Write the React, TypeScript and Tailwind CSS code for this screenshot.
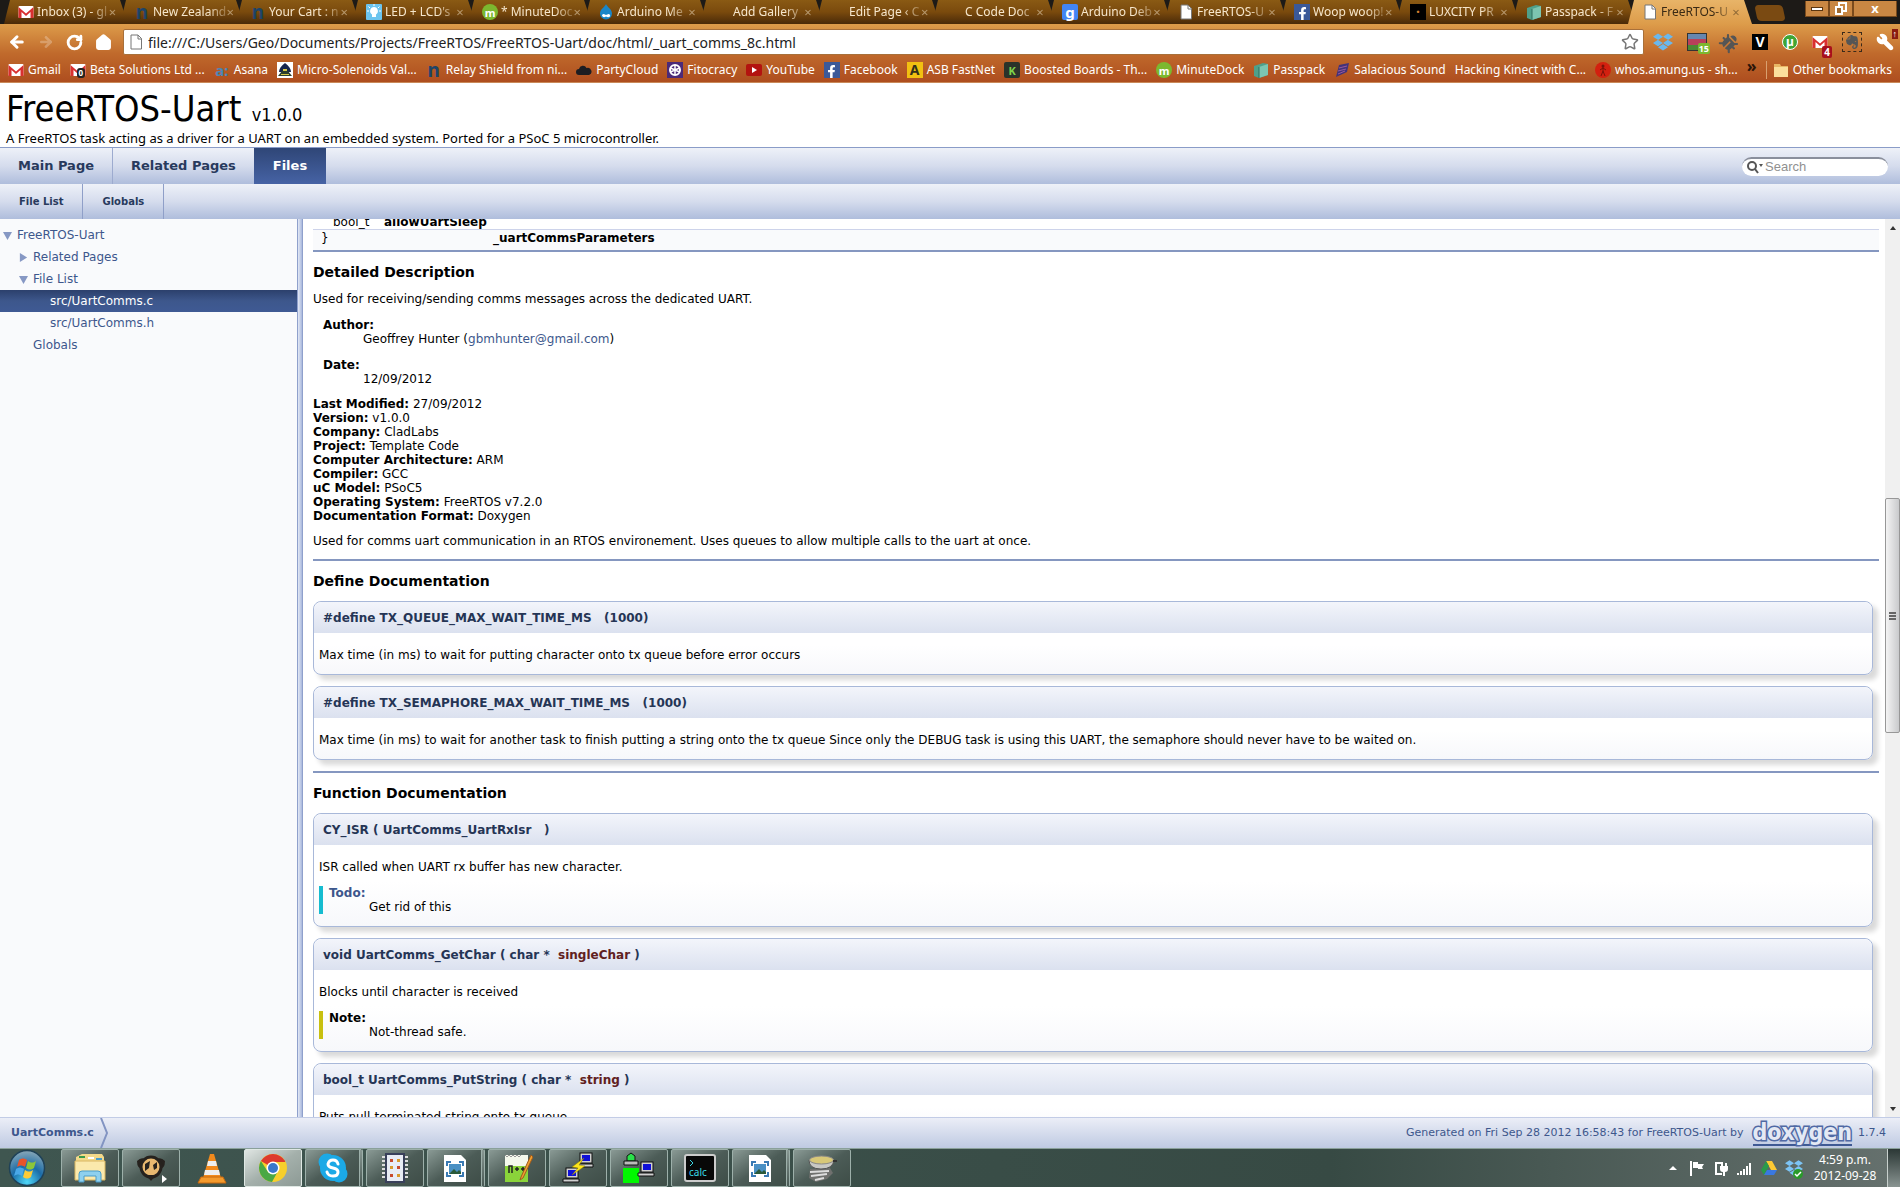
import type { ReactNode } from "react";
import { FaFacebookF, FaDropbox, FaBug, FaEvernote } from "react-icons/fa";
import { ArrowLeft, ArrowRight, House, RotateCw, Star, Wrench } from "lucide-react";

/* ---------- small site icons ---------- */

const GmailIcon = ({ badge }: { badge?: string }) => (
  <svg viewBox="0 0 16 16" className="w-4 h-4 shrink-0">
    <rect x="0.5" y="2" width="15" height="12" rx="1" fill="#fff" />
    <path d="M0.5 14V3l7.5 6.5L15.500 3v11h-3V8L8 12 3.500 8v6z" fill="#d93030" />
    {badge && <rect x="7" y="6" width="8" height="10" rx="3" fill="#222" />}
    {badge && <text x="8.500" y="14" fontSize="8" fontWeight="bold" fill="#fff">{badge}</text>}
  </svg>
);

const LetterIcon = ({ letter, className }: { letter: string; className: string }) => (
  <span className={`w-4 h-4 shrink-0 flex items-center justify-center font-bold leading-none ${className}`}>{letter}</span>
);

const PageIcon = ({ className = "" }: { className?: string }) => (
  <svg viewBox="0 0 16 16" className={`w-4 h-4 shrink-0 ${className}`}>
    <path d="M3 1h7l3.500 3.500V15H3z" fill="#fff" stroke="#777" />
    <path d="M10 1v4h3.500" fill="none" stroke="#777" />
  </svg>
);

const FacebookIcon = () => (
  <span className="w-4 h-4 shrink-0 bg-[#3b5998] flex items-end justify-center text-white">
    <FaFacebookF size={13} />
  </span>
);

const YoutubeIcon = () => (
  <svg viewBox="0 0 16 16" className="w-4 h-4 shrink-0">
    <rect y="2" width="16" height="12" rx="2" fill="#b3130f" />
    <path d="M6 5l5 3-5 3z" fill="#fff" />
  </svg>
);

const BulbIcon = () => (
  <svg viewBox="0 0 16 16" className="w-4 h-4 shrink-0">
    <rect width="16" height="16" rx="1" fill="#6cc4ee" />
    <path d="M8 3a4 4 0 0 0-2 7.400V13h4v-2.600A4 4 0 0 0 8 3z" fill="#fff" />
    <path d="M8 0v2M1 7h2M13 7h2M2.500 2.500l1.500 1.500M13.500 2.500L12 4" stroke="#fff" />
  </svg>
);

const DropIcon = () => (
  <svg viewBox="0 0 16 16" className="w-4 h-4 shrink-0">
    <path d="M8 0c1 3 6 5 6 9.500A6 6 0 0 1 2 9.500C2 5 7 3 8 0z" fill="#1a86c8" />
    <path d="M4 11c2-2 3 0 4 0s3-2 4 0-2 3-4 1.500C6 14 4 13 4 11z" fill="#fff" />
  </svg>
);

const CubeIcon = () => (
  <svg viewBox="0 0 16 16" className="w-4 h-4 shrink-0">
    <path d="M1 4l9-3 5 1v11l-9 3-5-2z" fill="#4fa08a" />
    <path d="M6 5l9-3v11l-9 3z" fill="#7cc5b0" />
    <path d="M6 5v11" stroke="#2e6e5c" />
  </svg>
);

const CloudIcon = () => (
  <svg viewBox="0 0 16 16" className="w-4 h-4 shrink-0">
    <path d="M3 13a3 3 0 0 1 0-6 4 4 0 0 1 7.500-1A3.500 3.500 0 0 1 13 13z" fill="#1d1d22" />
  </svg>
);

const SolenoidIcon = () => (
  <svg viewBox="0 0 16 16" className="w-4 h-4 shrink-0">
    <rect width="16" height="16" fill="#fff" />
    <path d="M8 1c4 3 6 6 6 9H2c0-3 2-6 6-9z" fill="#16264e" />
    <path d="M1 14l4-5h6l4 5z" fill="#2c3f2e" />
    <path d="M6 7h4v2H6zM4 12h8v1H4z" fill="#d7c84a" />
  </svg>
);

const FitocracyIcon = () => (
  <svg viewBox="0 0 16 16" className="w-4 h-4 shrink-0">
    <rect width="16" height="16" fill="#4b2a78" />
    <circle cx="8" cy="8" r="5" fill="none" stroke="#fff" strokeWidth="2" />
    <path d="M8 3v10M3.500 6l9 4M3.500 10l9-4" stroke="#fff" strokeWidth="1.500" />
  </svg>
);

const StripesIcon = () => (
  <svg viewBox="0 0 16 16" className="w-4 h-4 shrink-0">
    <path d="M5 3l10-2-2 9-11 5z" fill="#43327a" />
    <path d="M5 6l8-2M4 9l8-2M4 12l7-3" stroke="#9a5a9a" />
  </svg>
);

const WalkerIcon = () => (
  <svg viewBox="0 0 16 16" className="w-4 h-4 shrink-0">
    <circle cx="8" cy="8" r="8" fill="#d3200f" />
    <circle cx="8" cy="4" r="1.500" fill="#7a1208" />
    <path d="M8 5v4l-2 5M8 9l2 5M5 8l3-2 3 2" stroke="#7a1208" fill="none" />
  </svg>
);

const FolderIcon = () => (
  <svg viewBox="0 0 16 16" className="w-4 h-4 shrink-0">
    <path d="M1 2h6l1 2h7v11H1z" fill="#e8b765" />
    <path d="M1 5h14v10H1z" fill="#fbdf9c" />
  </svg>
);

/* ---------- browser chrome ---------- */

interface BrowserTab {
  title: string;
  icon: ReactNode;
}

const nIcon = <LetterIcon letter="n" className="text-[19px] text-[#1d4468]" />;
const mIcon = <LetterIcon letter="m" className="rounded-full bg-[#7cb82f] text-white text-[11px]" />;
const blank = <span className="w-4 h-4 shrink-0" />;

const tabs: BrowserTab[] = [
  { title: "Inbox (3) - gl", icon: <GmailIcon /> },
  { title: "New Zealand", icon: nIcon },
  { title: "Your Cart : n", icon: nIcon },
  { title: "LED + LCD's", icon: <BulbIcon /> },
  { title: "* MinuteDoc", icon: mIcon },
  { title: "Arduino Me", icon: <DropIcon /> },
  { title: "Add Gallery", icon: blank },
  { title: "Edit Page ‹ C", icon: blank },
  { title: "C Code Doc", icon: blank },
  { title: "Arduino Deb", icon: <LetterIcon letter="g" className="bg-[#4285f4] text-white text-[15px] rounded-xs" /> },
  { title: "FreeRTOS-U", icon: <PageIcon /> },
  { title: "Woop woop!", icon: <FacebookIcon /> },
  { title: "LUXCITY PR", icon: <LetterIcon letter="·" className="bg-black text-[#d08030] text-[14px]" /> },
  { title: "Passpack - F", icon: <CubeIcon /> },
];

const bookmarks: BrowserTab[] = [
  { title: "Gmail", icon: <GmailIcon /> },
  { title: "Beta Solutions Ltd ...", icon: <GmailIcon badge="0" /> },
  { title: "Asana", icon: <LetterIcon letter="a:" className="text-[15px] text-[#4a86b8]" /> },
  { title: "Micro-Solenoids Val...", icon: <SolenoidIcon /> },
  { title: "Relay Shield from ni...", icon: nIcon },
  { title: "PartyCloud", icon: <CloudIcon /> },
  { title: "Fitocracy", icon: <FitocracyIcon /> },
  { title: "YouTube", icon: <YoutubeIcon /> },
  { title: "Facebook", icon: <FacebookIcon /> },
  { title: "ASB FastNet", icon: <LetterIcon letter="A" className="bg-[#f2c011] text-[#33301a] text-[14px]" /> },
  { title: "Boosted Boards - Th...", icon: <LetterIcon letter="K" className="rounded-xs bg-[#2a332a] text-[#7ed34a] text-[11px]" /> },
  { title: "MinuteDock", icon: mIcon },
  { title: "Passpack", icon: <CubeIcon /> },
  { title: "Salacious Sound", icon: <StripesIcon /> },
  { title: "Hacking Kinect with C...", icon: null },
  { title: "whos.amung.us - sh...", icon: <WalkerIcon /> },
];

function TabItem({ tab, active = false }: { tab: BrowserTab; active?: boolean }) {
  return (
    <div
      className={`-mr-2 flex h-6 w-[124px] shrink-0 items-center pl-[14px] pr-[10px] text-[12px] [clip-path:polygon(6px_0,calc(100%-8px)_0,100%_100%,0_100%)] ${
        active
          ? "bg-linear-to-b from-[#e8b468] to-[#dd9c4a] text-[#3a2a14]"
          : "bg-linear-to-b from-[#8a5a14] via-[#7a4a0d] to-[#4a2a08] text-[#f6e6cc]"
      }`}
    >
      {tab.icon}
      <span className="ml-[3px] flex-1 whitespace-nowrap [mask-image:linear-gradient(to_right,black_75%,transparent_110%)]">
        {tab.title}
      </span>
      <button aria-label="Close tab" className="w-3 text-[13px] leading-none opacity-50">×</button>
    </div>
  );
}

function Browser() {
  return (
    <header className="shrink-0 font-['Noto_Sans','Open_Sans',sans-serif]">
      <div className="flex h-6 items-end bg-[#1d1a17] pl-1 pt-px">
        {tabs.map((tab, i) => (
          <TabItem key={i} tab={tab} />
        ))}
        <TabItem active tab={{ title: "FreeRTOS-U", icon: <PageIcon /> }} />
        <button aria-label="New tab" className="ml-3 h-4 w-7 shrink-0 skew-x-12 self-center rounded-sm bg-[#7a4a12]" />
        <div className="ml-auto mr-[3px] flex self-start text-white">
          <button aria-label="Minimise" className="flex h-4 w-6 items-center justify-center border border-t-0 border-[#7a4a1c] bg-[#c98743]">
            <span className="h-1 w-3 border border-[#5a3510] bg-white" />
          </button>
          <button aria-label="Restore" className="flex h-4 w-6 items-center justify-center border border-t-0 border-[#7a4a1c] bg-[#c98743]">
            <svg viewBox="0 0 14 14" className="h-[14px] w-[14px]">
              <path d="M5 1h7v8H5z" fill="none" stroke="#fff" strokeWidth="2" />
              <path d="M2 5h6v7H2z" fill="#a06a30" stroke="#fff" strokeWidth="2" />
            </svg>
          </button>
          <button aria-label="Close" className="h-4 w-11 border border-t-0 border-[#7a4a1c] bg-[#c98743] text-[13px] font-bold leading-none">x</button>
        </div>
      </div>

      <div className="bg-linear-to-b from-[#dd9c4a] via-[#c06a2c] to-[#ad4c1e]">
        <div className="flex h-[34px] items-center pl-2 pr-[6px] pt-0.5">
          <div className="flex gap-3 text-white">
            <button aria-label="Back"><ArrowLeft size={18} strokeWidth={4} /></button>
            <button aria-label="Forward" className="opacity-25"><ArrowRight size={16} strokeWidth={4} /></button>
            <button aria-label="Reload"><RotateCw size={17} strokeWidth={4} /></button>
            <button aria-label="Home"><House size={17} strokeWidth={3} fill="#fff" /></button>
          </div>
          <div className="ml-[11px] flex h-[26px] flex-1 items-center rounded-xs border border-[#a8703a] bg-white px-1">
            <PageIcon />
            <input
              aria-label="Address"
              className="ml-1 flex-1 text-[14px] text-[#222] outline-none"
              defaultValue="file:///C:/Users/Geo/Documents/Projects/FreeRTOS/FreeRTOS-Uart/doc/html/_uart_comms_8c.html"
            />
            <button aria-label="Bookmark this page" className="text-[#777]"><Star size={18} strokeWidth={2} /></button>
          </div>
          <div className="flex w-[250px] items-center justify-between pl-[9px]">
            <FaDropbox size={20} className="text-[#6ab8ee]" />
            <span className="relative flex h-[18px] w-5 flex-col border border-[#333]">
              <i className="flex-1 bg-[#6686b0]" />
              <i className="flex-1 bg-[#b8405a]" />
              <i className="flex-1 bg-[#4a8a34]" />
              <b className="absolute -bottom-1 -right-1 rounded-xs bg-[#7cb82f] px-px text-[9px] leading-[11px] text-white">15</b>
            </span>
            <FaBug size={17} className="rotate-45 text-[#555]" />
            <LetterIcon letter="V" className="bg-black text-white text-[14px]" />
            <LetterIcon letter="µ" className="rounded-full border border-white bg-[#3fa535] text-white text-[12px]" />
            <span className="relative">
              <GmailIcon />
              <b className="absolute -bottom-2 -right-1 rounded-xs bg-[#a8101c] px-0.5 text-[10px] leading-[12px] text-white">4</b>
            </span>
            <span className="border border-dashed border-[#3a2a1a] p-px"><FaEvernote size={16} className="text-[#555]" /></span>
            <span className="relative">
              <Wrench size={18} fill="#fff" className="-scale-x-100 text-white" />
              <b className="absolute -right-1 -top-1 bg-[#8a1c10] px-px text-[9px] leading-[10px] text-white">↑</b>
            </span>
          </div>
        </div>

        <nav className="flex h-[25px] items-center gap-[9px] whitespace-nowrap border-b border-[#c98a5a] px-2 text-[12px] text-white">
          {bookmarks.map((b) => (
            <a key={b.title} href="#" className="flex items-center gap-1">
              {b.icon}
              {b.title}
            </a>
          ))}
          <button aria-label="More bookmarks" className="ml-auto self-start text-[16px] font-bold leading-4 text-[#2a1408]">»</button>
          <a href="#" className="flex items-center gap-1 border-l border-[#d9a070] pl-[6px]">
            <FolderIcon />
            Other bookmarks
          </a>
        </nav>
      </div>
    </header>
  );
}

/* ---------- documentation page ---------- */

function DocHeader() {
  return (
    <div className="shrink-0">
      <div className="h-[65px] border-b border-[#8a9cc8] px-[6px] font-['DejaVu_Sans_Condensed','DejaVu_Sans',sans-serif]">
        <h1 className="pt-1 text-[36px] leading-[44px]">
          FreeRTOS-Uart <span className="text-[18px] leading-none">v1.0.0</span>
        </h1>
        <p className="font-['Noto_Sans','Open_Sans',sans-serif] text-[13px] leading-[15px]">
          A FreeRTOS task acting as a driver for a UART on an embedded system. Ported for a PSoC 5 microcontroller.
        </p>
      </div>
      <nav className="flex h-9 items-center bg-linear-to-b from-[#eef1f8] via-[#d5dced] to-[#afbddc] pr-3 text-[13px] font-bold text-[#283a5d]">
        <a href="#" className="flex h-full items-center border-r border-[#9dabcf] px-[18px]">Main Page</a>
        <a href="#" className="flex h-full items-center px-[18px]">Related Pages</a>
        <a href="#" className="flex h-full items-center bg-linear-to-b from-[#2f4677] to-[#4663a5] px-[19px] text-white">Files</a>
        <label className="ml-auto flex h-[19px] w-[146px] items-center rounded-full border-t-2 border-[#8a8f9c] bg-white pl-1 text-[#555]">
          <svg viewBox="0 0 18 14" className="h-[14px] w-[18px] shrink-0">
            <circle cx="6" cy="6" r="4" fill="none" stroke="#555" strokeWidth="2" />
            <path d="M9 9l3 4" stroke="#555" strokeWidth="2" />
            <path d="M13 4h4l-2 3z" fill="#555" />
          </svg>
          <input
            aria-label="Search"
            placeholder="Search"
            className="ml-px w-full font-['Liberation_Sans',Arial,sans-serif] text-[13px] font-normal outline-none placeholder:text-[#909090]"
          />
        </label>
      </nav>
      <nav className="flex h-[35px] items-center bg-linear-to-b from-[#eef1f8] via-[#d5dced] to-[#afbddc] text-[10px] font-bold text-[#283a5d]">
        <a href="#" className="flex h-full items-center border-r border-[#8f9fc8] px-[19px]">File List</a>
        <a href="#" className="flex h-full items-center border-r border-[#8f9fc8] px-[19px]">Globals</a>
      </nav>
    </div>
  );
}

function TreeRow({ label, depth, arrow = "", selected = false }: { label: string; depth: string; arrow?: string; selected?: boolean }) {
  return (
    <li className={`${depth} ${selected ? "bg-linear-to-b from-[#2c406c] via-[#3d578c] to-[#3f5a94] text-white" : "text-[#3d578c]"}`}>
      <a href="#" className="flex h-[22px] items-center text-[12px]">
        {arrow && (
          <svg viewBox="0 0 10 10" className="mr-[5px] h-[9px] w-[9px]">
            <path d={arrow === "open" ? "M0 1h10L5 10z" : "M1 0v10l8-5z"} fill="#8698c4" />
          </svg>
        )}
        {label}
      </a>
    </li>
  );
}

function Sidebar() {
  return (
    <aside className="flex w-[303px] shrink-0">
      <ul className="flex-1 bg-[#f9fafc] pt-[5px]">
        <TreeRow label="FreeRTOS-Uart" depth="pl-[3px]" arrow="open" />
        <TreeRow label="Related Pages" depth="pl-[19px]" arrow="closed" />
        <TreeRow label="File List" depth="pl-[19px]" arrow="open" />
        <TreeRow label="src/UartComms.c" depth="pl-[50px]" selected />
        <TreeRow label="src/UartComms.h" depth="pl-[50px]" />
        <TreeRow label="Globals" depth="pl-[33px]" />
      </ul>
      <div className="w-[6px] border-x border-[#8fa0cc] bg-linear-to-r from-[#e4e9f5] to-[#a9b8dc]" />
    </aside>
  );
}

function Card({ title, children }: { title: ReactNode; children: ReactNode }) {
  return (
    <section className="mb-[11px] mr-[6px] rounded-lg border border-[#a8b8d9] bg-linear-to-b from-white from-60% to-[#f7f8fb] shadow-[5px_5px_5px_rgba(0,0,0,0.15)]">
      <h3 className="flex h-[31px] items-center whitespace-pre rounded-t-lg bg-linear-to-b from-[#f3f5fb] to-[#dbe1ef] px-[9px] text-[12px] font-bold text-[#253555]">
        {title}
      </h3>
      <div className="px-[5px] pb-3 pt-[15px]">{children}</div>
    </section>
  );
}

function Remark({ label, bar, children }: { label: ReactNode; bar: string; children: ReactNode }) {
  return (
    <dl className={`mt-3 border-l-4 pl-[6px] ${bar}`}>
      <dt className="font-bold">{label}</dt>
      <dd className="pl-10">{children}</dd>
    </dl>
  );
}

const details = [
  ["Last Modified:", "27/09/2012"],
  ["Version:", "v1.0.0"],
  ["Company:", "CladLabs"],
  ["Project:", "Template Code"],
  ["Computer Architecture:", "ARM"],
  ["Compiler:", "GCC"],
  ["uC Model:", "PSoC5"],
  ["Operating System:", "FreeRTOS v7.2.0"],
  ["Documentation Format:", "Doxygen"],
];

const Heading = ({ children }: { children: ReactNode }) => (
  <h2 className="border-t-2 border-[#8597c0] py-[11px] text-[14px] font-bold leading-[18px]">{children}</h2>
);

function Content() {
  return (
    <main className="min-w-0 flex-1 overflow-hidden pl-[10px] pr-[6px] text-[12px] leading-[14px] text-black">
      <div className="-mt-1 flex h-[14px] pl-5">
        <span className="w-[51px]">bool_t</span>
        <b>allowUartSleep</b>
      </div>
      <div className="flex h-[21px] items-center border-t border-[#cdd3ea] bg-[#f9fafc] pb-1 pl-2">
        <span className="w-[172px]">{"}"}</span>
        <b>_uartCommsParameters</b>
      </div>

      <Heading>Detailed Description</Heading>
      <p className="mb-3">Used for receiving/sending comms messages across the dedicated UART.</p>
      <dl className="mb-3 pl-[10px]">
        <dt className="font-bold">Author:</dt>
        <dd className="pl-10">
          Geoffrey Hunter (<a href="#" className="text-[#3d578c]">gbmhunter@gmail.com</a>)
        </dd>
      </dl>
      <dl className="mb-[11px] pl-[10px]">
        <dt className="font-bold">Date:</dt>
        <dd className="pl-10">12/09/2012</dd>
      </dl>
      <ul className="mb-[11px]">
        {details.map(([name, value]) => (
          <li key={name}>
            <b>{name}</b> {value}
          </li>
        ))}
      </ul>
      <p className="mb-[11px]">
        Used for comms uart communication in an RTOS environement. Uses queues to allow multiple calls to the uart at once.
      </p>

      <Heading>Define Documentation</Heading>
      <Card title="#define TX_QUEUE_MAX_WAIT_TIME_MS   (1000)">
        <p>Max time (in ms) to wait for putting character onto tx queue before error occurs</p>
      </Card>
      <Card title="#define TX_SEMAPHORE_MAX_WAIT_TIME_MS   (1000)">
        <p>
          Max time (in ms) to wait for another task to finish putting a string onto the tx queue Since only the DEBUG task is
          using this UART, the semaphore should never have to be waited on.
        </p>
      </Card>

      <Heading>Function Documentation</Heading>
      <Card title="CY_ISR ( UartComms_UartRxIsr   )">
        <p>ISR called when UART rx buffer has new character.</p>
        <Remark bar="border-[#16bcd0]" label={<a href="#" className="text-[#3d578c]">Todo:</a>}>
          Get rid of this
        </Remark>
      </Card>
      <Card title={<>void UartComms_GetChar ( char *  <span className="text-[#602020]">singleChar</span> )</>}>
        <p>Blocks until character is received</p>
        <Remark bar="border-[#c8c010]" label="Note:">
          Not-thread safe.
        </Remark>
      </Card>
      <Card title={<>bool_t UartComms_PutString ( char *  <span className="text-[#602020]">string</span> )</>}>
        <p>Puts null-terminated string onto tx queue.</p>
      </Card>
    </main>
  );
}

function ScrollTrack() {
  return (
    <div className="flex w-[15px] shrink-0 flex-col items-center bg-[#f0f0f0] text-[#333]">
      <svg viewBox="0 0 8 16" className="h-4 w-2"><path d="M1 11h6L4 7z" fill="#333" /></svg>
      <div className="mt-[263px] flex h-[235px] w-full flex-col items-center justify-center gap-px rounded-xs border border-[#979797] bg-linear-to-r from-[#f4f4f4] to-[#c9cacc]">
        <i className="h-0.5 w-[7px] bg-[#666]" />
        <i className="h-0.5 w-[7px] bg-[#666]" />
        <i className="h-0.5 w-[7px] bg-[#666]" />
      </div>
      <span className="flex-1" />
      <svg viewBox="0 0 8 16" className="h-4 w-2"><path d="M1 6h6L4 10z" fill="#333" /></svg>
    </div>
  );
}

function DocFooter() {
  return (
    <footer className="flex h-[31px] shrink-0 items-center border-t border-[#c2cce6] bg-linear-to-b from-[#ebeef7] to-[#bfcae2] pr-[14px] text-[11px] text-[#3d578c]">
      <a href="#" className="pl-[11px] font-bold">UartComms.c</a>
      <svg viewBox="0 0 10 30" className="ml-[6px] h-[30px] w-[10px]">
        <path d="M1 0l6 15-6 15" fill="none" stroke="#8294c2" strokeWidth="2" />
      </svg>
      <span className="ml-auto">Generated on Fri Sep 28 2012 16:58:43 for FreeRTOS-Uart by</span>
      <a
        href="#"
        className="ml-[9px] mr-[6px] border-b-2 border-[#3f5a94] font-['DejaVu_Sans_Condensed','DejaVu_Sans',sans-serif] text-[23px] leading-[23px] font-bold text-[#e4e9f4] [-webkit-text-stroke:3px_#5069a4] [paint-order:stroke_fill]"
      >
        doxygen
      </a>
      <span>1.7.4</span>
    </footer>
  );
}

/* ---------- taskbar ---------- */

const StartOrb = () => (
  <svg viewBox="0 0 38 38" className="h-[38px] w-[38px]">
    <defs>
      <radialGradient id="orb" cx="0.500" cy="0.9" r="0.9">
        <stop offset="0" stopColor="#4fd8f8" />
        <stop offset="0.500" stopColor="#1a6ca8" />
        <stop offset="1" stopColor="#8aa8b8" />
      </radialGradient>
    </defs>
    <circle cx="19" cy="19" r="17.500" fill="url(#orb)" stroke="#1f4258" strokeWidth="1.500" />
    <path d="M11 11c3-2 5-2 8 0l-2 7c-3-2-5-2-8 0z" fill="#e8542a" />
    <path d="M20 12c3 2 5 2 8 0l-2 7c-3 2-5 2-8 0z" fill="#8cc63a" />
    <path d="M8 20c3-2 5-2 8 0l-2 7c-3-2-5-2-8 0z" fill="#4aa8e8" />
    <path d="M17 21c3 2 5 2 8 0l-2 7c-3 2-5 2-8 0z" fill="#fccb38" />
  </svg>
);

const ExplorerArt = () => (
  <svg viewBox="0 0 32 32" className="h-8 w-8">
    <path d="M2 5l6-3h20l2 3v22H2z" fill="#f3d98a" />
    <path d="M1 9h30v19H1z" fill="#fbe9ac" stroke="#d9b660" />
    <path d="M5 5h6" stroke="#3a9a4a" strokeWidth="2" />
    <path d="M14 6h6" stroke="#fff" strokeWidth="2" />
    <path d="M22 7h6" stroke="#4a9cc8" strokeWidth="2" />
    <path d="M5 30v-8q0-3 3-3h16q3 0 3 3v8h-5v-6H10v6z" fill="#8ed0ee" stroke="#4a9cc8" />
  </svg>
);

const HeadArt = () => (
  <svg viewBox="0 0 32 32" className="h-8 w-8">
    <path d="M2 9q5-5 9-1l-3 9q-6 0-6-8zM30 9q-5-5-9-1l3 9q6 0 6-8z" fill="#26221e" />
    <circle cx="16" cy="15" r="10" fill="#e8b870" stroke="#26221e" strokeWidth="3" />
    <path d="M10 12l5-3-1 7-4 3zM22 10l-4 3 1 5 3-2z" fill="#26221e" />
    <path d="M11 23h10l-5 6z" fill="#26221e" />
    <path d="M27 23l5 4-5 4z" fill="#fff" />
  </svg>
);

const ConeArt = () => (
  <svg viewBox="0 0 32 32" className="h-8 w-8">
    <path d="M14 2h4l7 24H7z" fill="#f28a1c" />
    <path d="M12 9h8l1 5H11zM9 18h14l1 5H8z" fill="#eee" />
    <path d="M5 25h22l3 6H2z" fill="#f49a2c" stroke="#c8680c" />
  </svg>
);

const ChromeArt = () => (
  <svg viewBox="0 0 32 32" className="h-8 w-8">
    <circle cx="16" cy="16" r="14" fill="#f7cf2c" />
    <path d="M16 16L3.900 9A14 14 0 0 1 28.100 9L28 10H16z" fill="#dd3a2e" />
    <path d="M16 16l-5 4L3.900 9A14 14 0 0 0 15 30l6-11z" fill="#4aa844" />
    <circle cx="16" cy="16" r="6.500" fill="#fff" />
    <circle cx="16" cy="16" r="5" fill="#3a78cc" />
  </svg>
);

const SkypeArt = () => (
  <svg viewBox="0 0 32 32" className="h-8 w-8">
    <circle cx="10" cy="10" r="8.500" fill="#1ba9e6" />
    <circle cx="22" cy="22" r="8.500" fill="#1ba9e6" />
    <circle cx="16" cy="16" r="13" fill="#1ba9e6" />
    <path d="M21 12q-1-4-5-4t-5 4q0 3 5 4t5 4q0 4-5 4t-6-4" fill="none" stroke="#fff" strokeWidth="3" strokeLinecap="round" />
  </svg>
);

const ChipArt = () => (
  <svg viewBox="0 0 32 32" className="h-8 w-8">
    <path d="M3 5h26M3 9h26M3 13h26M3 17h26M3 21h26M3 25h26" stroke="#ddd" strokeWidth="2" />
    <rect x="7" y="2" width="18" height="28" fill="#e8ecf4" stroke="#39405a" strokeWidth="2" />
    <path d="M11 7h3v3h-3zM18 14h3v3h-3zM11 22h3v3h-3z" fill="#c84a2c" />
    <path d="M18 7h3v3h-3zM11 14h3v3h-3zM18 22h3v3h-3z" fill="#d89a2c" />
  </svg>
);

const PictureDocArt = () => (
  <svg viewBox="0 0 32 32" className="h-8 w-8">
    <path d="M5 3h17l5 5v22H5z" fill="#fff" />
    <path d="M10 12h12v10H10z" fill="#4a90c4" />
    <path d="M10 22l5-5 3 3 2-2 2 2v2z" fill="#2a5a3a" />
    <path d="M8 14v-4h4M20 10h4v4M24 20v4h-4M12 24H8v-4" fill="none" stroke="#3a7ab4" strokeWidth="2" />
  </svg>
);

const NotepadArt = () => (
  <svg viewBox="0 0 32 32" className="h-8 w-8">
    <path d="M4 3h23v27H4z" fill="#f4f8ec" />
    <path d="M4 14h23v16H4z" fill="#8ad43a" />
    <path d="M4 3l2 2 2-2 2 2 2-2 2 2 2-2 2 2 2-2" stroke="#999" fill="none" />
    <path d="M8 21v-7h3v7M14 17h4M16 15v4M20 17h4M22 15v4" stroke="#222" strokeWidth="1.500" fill="none" />
    <path d="M30 3L20 25l-1 3 3-2L32 5z" fill="#f0a030" stroke="#a05a1c" />
  </svg>
);

const Monitor = ({ x, y }: { x: number; y: number }) => (
  <g>
    <rect x={x + 3} y={y} width="12" height="10" fill="#d0d0d0" stroke="#111" />
    <rect x={x + 5} y={y + 2} width="8" height="6" fill="#1010d8" />
    <path d={`M${x} ${y + 11}h16v3h-16z`} fill="#d0d0d0" stroke="#111" />
  </g>
);

const PuttyArt = () => (
  <svg viewBox="0 0 32 32" className="h-8 w-8">
    <Monitor x={15} y={1} />
    <Monitor x={1} y={16} />
    <path d="M22 6l-12 9 6 1-6 7 13-9-6-1z" fill="#fce51c" stroke="#8a7a00" strokeWidth="0.500" />
  </svg>
);

const TransferArt = () => (
  <svg viewBox="0 0 32 32" className="h-8 w-8">
    <path d="M0 16h16v15H0z" fill="#00f800" />
    <path d="M4 4l4-3 4 3v5H4z" fill="#2ae04a" stroke="#111" />
    <path d="M1 9h14v4H1z" fill="#bbb" stroke="#111" />
    <Monitor x={15} y={10} />
  </svg>
);

const CalcArt = () => (
  <svg viewBox="0 0 32 28" className="h-[28px] w-8">
    <rect x="1" y="1" width="30" height="26" rx="2" fill="#080808" stroke="#ccc" strokeWidth="2" />
    <path d="M6 6l3 3-3 3" fill="none" stroke="#3ad8e8" />
    <text x="5" y="22" fontSize="10" fill="#3ad8e8">calc</text>
  </svg>
);

const BowlArt = () => (
  <svg viewBox="0 0 32 32" className="h-8 w-8">
    <path d="M4 17l20-1 3 5-6 6-11 3-7-4z" fill="#6f706e" />
    <path d="M4 20l19-1M5 24l16-2M9 28l9-2" stroke="#ddd" strokeWidth="2" />
    <path d="M3 8q0 9 12 9t13-9z" fill="#c8c8c4" stroke="#555" />
    <ellipse cx="15.500" cy="8" rx="12" ry="4" fill="#d8c878" stroke="#888" />
    <path d="M27 9h4" stroke="#333" strokeWidth="2" />
  </svg>
);

const apps: { name: string; art: ReactNode; kind?: "plain" | "active" | "stack" }[] = [
  { name: "Explorer", art: <ExplorerArt /> },
  { name: "Player", art: <HeadArt /> },
  { name: "VLC", art: <ConeArt />, kind: "plain" },
  { name: "Chrome", art: <ChromeArt />, kind: "active" },
  { name: "Skype", art: <SkypeArt />, kind: "stack" },
  { name: "PSoC Creator", art: <ChipArt /> },
  { name: "Pictures", art: <PictureDocArt />, kind: "stack" },
  { name: "Notepad++", art: <NotepadArt /> },
  { name: "PuTTY", art: <PuttyArt /> },
  { name: "Transfer", art: <TransferArt /> },
  { name: "Calculator", art: <CalcArt /> },
  { name: "Documents", art: <PictureDocArt />, kind: "stack" },
  { name: "Kitchen", art: <BowlArt /> },
];

const frames = {
  normal: "border border-[#9db0aa] bg-linear-to-br from-[#8a9a95] via-[#4c5c57] to-[#3e4d47]",
  plain: "",
  active: "border border-[#dfe8e4] bg-linear-to-br from-[#e0e6e3] via-[#a4b0ab] to-[#8d9a95]",
  stack: "border border-r-4 border-double border-[#9db0aa] bg-linear-to-br from-[#8a9a95] via-[#4c5c57] to-[#3e4d47]",
};

function Taskbar() {
  return (
    <footer className="flex h-[39px] shrink-0 items-stretch border-t border-[#8aa09a] bg-linear-to-r from-[#3f5650] via-[#374a44] via-70% to-[#66716e] font-['Noto_Sans','Open_Sans',sans-serif] text-white">
      <button aria-label="Start" className="flex w-[61px] items-center pl-2"><StartOrb /></button>
      <div className="flex gap-[3px]">
        {apps.map((app) => (
          <button
            key={app.name}
            aria-label={app.name}
            className={`flex w-[58px] items-center justify-center rounded-xs ${frames[app.kind ?? "normal"]}`}
          >
            {app.art}
          </button>
        ))}
      </div>
      <div className="ml-auto flex items-center gap-2">
        <svg viewBox="0 0 16 16" className="h-4 w-4"><path d="M4 10h8L8 6z" fill="#fff" /></svg>
        <svg viewBox="0 0 16 16" className="h-4 w-4"><path d="M2 1v15" stroke="#fff" strokeWidth="2" /><path d="M4 2h5v2h6l-2 3 1 2H9V8H4z" fill="#fff" /></svg>
        <svg viewBox="0 0 16 16" className="h-4 w-4"><path d="M2 2h8v2H4v9h5v2H2z" fill="#fff" /><path d="M7 6h8v3q0 3-3 3v4h-2v-4q-3 0-3-3zM8 3h2v3H8zM12 3h2v3h-2z" fill="#fff" /></svg>
        <svg viewBox="0 0 16 16" className="h-4 w-4"><path d="M1 13v2M4 11v4M7 9v6M10 6v9M13 3v12" stroke="#fff" strokeWidth="2" /></svg>
        <svg viewBox="0 0 16 16" className="h-4 w-4"><path d="M5 1h6l5 9h-6z" fill="#fcc934" /><path d="M5 1l3 5-5 9-3-5z" fill="#2a9a4a" /><path d="M6 10h10l-3 5H3z" fill="#3a78e0" /></svg>
        <span className="relative">
          <FaDropbox size={18} className="text-[#7cc4f4]" />
          <svg viewBox="0 0 10 10" className="absolute -bottom-0.5 right-0 h-[10px] w-[10px]">
            <circle cx="5" cy="5" r="5" fill="#2a9a2a" />
            <path d="M2 5l2 2 4-4" fill="none" stroke="#fff" strokeWidth="1.500" />
          </svg>
        </span>
        <time className="w-[68px] text-center text-[12px] leading-4">
          4:59 p.m.
          <br />
          2012-09-28
        </time>
        <button aria-label="Show desktop" className="h-full w-[13px] border-l border-[#c8d0cd] bg-linear-to-b from-[#2c3836] to-[#8a9592]" />
      </div>
    </footer>
  );
}

export default function App() {
  return (
    <div className="flex h-screen flex-col overflow-hidden bg-white font-['DejaVu_Sans',Verdana,sans-serif]">
      <Browser />
      <DocHeader />
      <div className="flex min-h-0 flex-1">
        <Sidebar />
        <Content />
        <ScrollTrack />
      </div>
      <DocFooter />
      <Taskbar />
    </div>
  );
}
